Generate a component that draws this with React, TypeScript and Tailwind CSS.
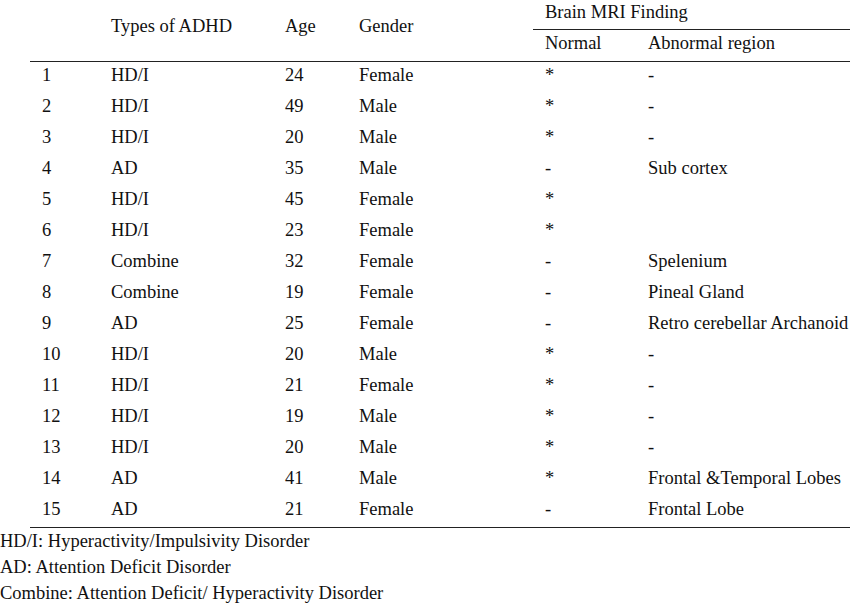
const rows: [string, string, string, string, string, string][] = [
  ['1', 'HD/I', '24', 'Female', '*', '-'],
  ['2', 'HD/I', '49', 'Male', '*', '-'],
  ['3', 'HD/I', '20', 'Male', '*', '-'],
  ['4', 'AD', '35', 'Male', '-', 'Sub cortex'],
  ['5', 'HD/I', '45', 'Female', '*', ''],
  ['6', 'HD/I', '23', 'Female', '*', ''],
  ['7', 'Combine', '32', 'Female', '-', 'Spelenium'],
  ['8', 'Combine', '19', 'Female', '-', 'Pineal Gland'],
  ['9', 'AD', '25', 'Female', '-', 'Retro cerebellar Archanoid'],
  ['10', 'HD/I', '20', 'Male', '*', '-'],
  ['11', 'HD/I', '21', 'Female', '*', '-'],
  ['12', 'HD/I', '19', 'Male', '*', '-'],
  ['13', 'HD/I', '20', 'Male', '*', '-'],
  ['14', 'AD', '41', 'Male', '*', 'Frontal &Temporal Lobes'],
  ['15', 'AD', '21', 'Female', '-', 'Frontal Lobe'],
];

const notes = [
  'HD/I: Hyperactivity/Impulsivity Disorder',
  'AD: Attention Deficit Disorder',
  'Combine: Attention Deficit/ Hyperactivity Disorder',
];

const cols = 'grid grid-cols-[69px_174px_74px_186px_104px_213px]';

export default function App() {
  return (
    <div className="h-[604px] w-[850px] overflow-hidden bg-white font-['Liberation_Serif','Times_New_Roman',serif] text-[18.5px] text-[#111]">
      <div className="ml-[30px] w-[820px]">
        {/* header */}
        <div className={`${cols} border-b-[1.5px] border-[#222]`}>
          <div className="row-span-2" />
          <div className="row-span-2 pl-3 pt-[13px] leading-[26px]">Types of ADHD</div>
          <div className="row-span-2 pl-3 pt-[13px] leading-[26px]">Age</div>
          <div className="row-span-2 pl-3 pt-[13px] leading-[26px]">Gender</div>
          <div className="col-span-2 h-[30px] border-b-[1.5px] border-[#222] pl-3 leading-[24px]">
            Brain MRI Finding
          </div>
          <div className="h-[31px] pl-3 leading-[26px]">Normal</div>
          <div className="h-[31px] pl-[11px] leading-[26px]">Abnormal region</div>
        </div>

        {/* body */}
        <div className="border-b-[1.5px] border-[#222]">
          {rows.map((r) => (
            <div key={r[0]} className={`${cols} h-[31px] leading-[26px]`}>
              <div className="pl-3">{r[0]}</div>
              <div className="pl-3">{r[1]}</div>
              <div className="pl-3">{r[2]}</div>
              <div className="pl-3">{r[3]}</div>
              <div className="pl-3">{r[4]}</div>
              <div className="whitespace-nowrap pl-[11px]">{r[5]}</div>
            </div>
          ))}
        </div>
      </div>

      {/* footnotes */}
      <div className="leading-[26px]">
        {notes.map((n) => (
          <p key={n}>{n}</p>
        ))}
      </div>
    </div>
  );
}
